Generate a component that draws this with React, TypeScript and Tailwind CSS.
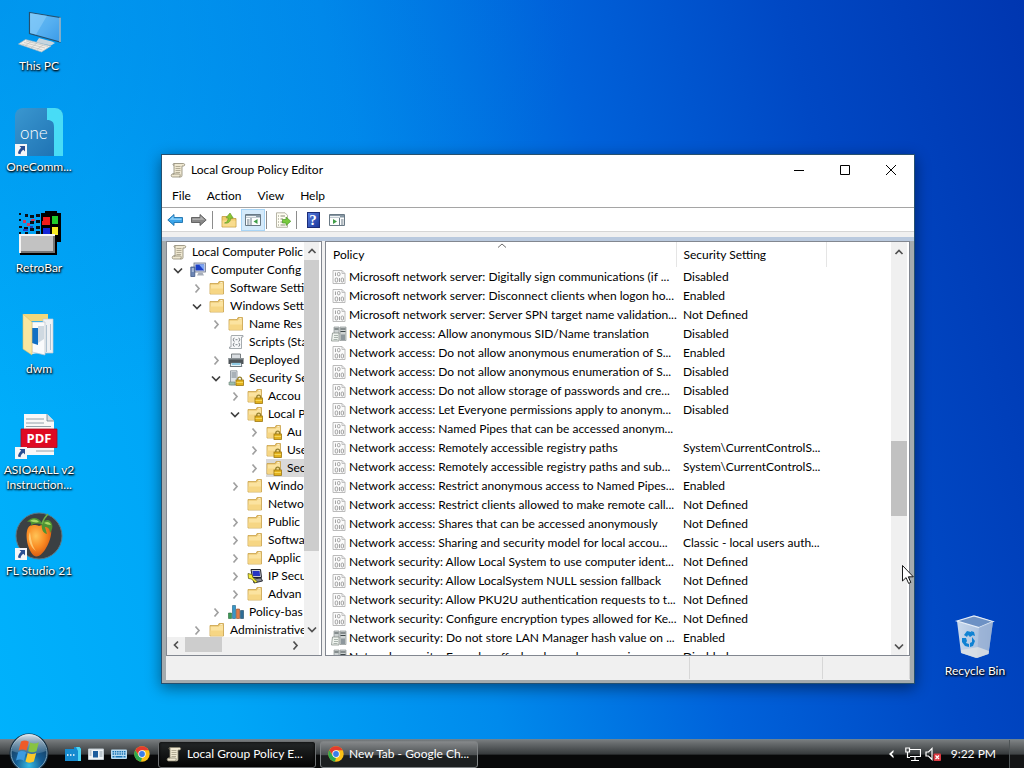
import type { ReactNode } from "react";

type IconName =
    | "scroll"
    | "computer"
    | "folder"
    | "script"
    | "printer"
    | "server"
    | "locked"
    | "ipsec"
    | "chart";

type TreeNode = {
    label: string;
    level: number;
    icon: IconName;
    state?: "open" | "closed";
    selected?: boolean;
};

const tree: TreeNode[] = [
    { label: "Local Computer Polic", level: 0, icon: "scroll" },
    { label: "Computer Config", level: 1, icon: "computer", state: "open" },
    { label: "Software Setti", level: 2, icon: "folder", state: "closed" },
    { label: "Windows Sett", level: 2, icon: "folder", state: "open" },
    { label: "Name Res", level: 3, icon: "folder", state: "closed" },
    { label: "Scripts (Sta", level: 3, icon: "script" },
    { label: "Deployed", level: 3, icon: "printer", state: "closed" },
    { label: "Security Se", level: 3, icon: "server", state: "open" },
    { label: "Accou", level: 4, icon: "locked", state: "closed" },
    { label: "Local P", level: 4, icon: "locked", state: "open" },
    { label: "Au", level: 5, icon: "locked", state: "closed" },
    { label: "Use", level: 5, icon: "locked", state: "closed" },
    { label: "Sec", level: 5, icon: "locked", state: "closed", selected: true },
    { label: "Windo", level: 4, icon: "folder", state: "closed" },
    { label: "Netwo", level: 4, icon: "folder" },
    { label: "Public", level: 4, icon: "folder", state: "closed" },
    { label: "Softwa", level: 4, icon: "folder", state: "closed" },
    { label: "Applic", level: 4, icon: "folder", state: "closed" },
    { label: "IP Secu", level: 4, icon: "ipsec", state: "closed" },
    { label: "Advan", level: 4, icon: "folder", state: "closed" },
    { label: "Policy-bas", level: 3, icon: "chart", state: "closed" },
    { label: "Administrative", level: 2, icon: "folder", state: "closed" },
];

const indents = ["pl-1", "pl-[3px]", "pl-[22px]", "pl-[41px]", "pl-[60px]", "pl-[79px]"];

type Policy = { name: string; setting: string; server?: boolean };

const policies: Policy[] = [
    { name: "Microsoft network server: Digitally sign communications (if ...", setting: "Disabled" },
    { name: "Microsoft network server: Disconnect clients when logon ho...", setting: "Enabled" },
    { name: "Microsoft network server: Server SPN target name validation...", setting: "Not Defined" },
    { name: "Network access: Allow anonymous SID/Name translation", setting: "Disabled", server: true },
    { name: "Network access: Do not allow anonymous enumeration of S...", setting: "Enabled" },
    { name: "Network access: Do not allow anonymous enumeration of S...", setting: "Disabled" },
    { name: "Network access: Do not allow storage of passwords and cre...", setting: "Disabled" },
    { name: "Network access: Let Everyone permissions apply to anonym...", setting: "Disabled" },
    { name: "Network access: Named Pipes that can be accessed anonym...", setting: "" },
    { name: "Network access: Remotely accessible registry paths", setting: "System\\CurrentControlS..." },
    { name: "Network access: Remotely accessible registry paths and sub...", setting: "System\\CurrentControlS..." },
    { name: "Network access: Restrict anonymous access to Named Pipes...", setting: "Enabled" },
    { name: "Network access: Restrict clients allowed to make remote call...", setting: "Not Defined" },
    { name: "Network access: Shares that can be accessed anonymously", setting: "Not Defined" },
    { name: "Network access: Sharing and security model for local accou...", setting: "Classic - local users auth..." },
    { name: "Network security: Allow Local System to use computer ident...", setting: "Not Defined" },
    { name: "Network security: Allow LocalSystem NULL session fallback", setting: "Not Defined" },
    { name: "Network security: Allow PKU2U authentication requests to t...", setting: "Not Defined" },
    { name: "Network security: Configure encryption types allowed for Ke...", setting: "Not Defined" },
    { name: "Network security: Do not store LAN Manager hash value on ...", setting: "Enabled", server: true },
    { name: "Network security: Force logoff when logon hours expire", setting: "Disabled", server: true },
];

function Svg({ children, className = "size-4" }: { children: ReactNode; className?: string }) {
    return (
        <svg viewBox="0 0 16 16" className={`${className} shrink-0`} fill="none" aria-hidden="true">
            {children}
        </svg>
    );
}

function ScrollIcon() {
    return (
        <Svg>
            <path d="M4 1.500h9.500c1.600 0 1.600 2.500 0 2.500H12v9.500c0 1-.7 1.500-1.500 1.500h-8C.8 15 .8 12 2.500 12H4z" fill="#efe8d2" stroke="#8c8672" strokeWidth=".8" />
            <path d="M4 1.500c-1.300 0-1.300 2 0 2M2.500 12h6.800c1.200 0 1.200 3-.2 3" stroke="#8c8672" strokeWidth=".8" />
            <path d="M5.500 4.500h5M5.500 6.500h5M5.500 8.500h5M5.500 10.500h4.500" stroke="#a39c86" strokeWidth=".8" />
        </Svg>
    );
}

function FolderShape() {
    return (
        <>
            <path d="M1 3.500h8l1-2h4.500v12.500H1z" fill="#e6c069" stroke="#c9a24a" strokeWidth=".8" />
            <path d="M1.500 4.500h8.200l1-1.200H14v10.300H1.500z" fill="#fbe3a0" />
            <path d="M1.500 8.500h12.500v5.100H1.500z" fill="#f6d684" />
            <path d="M11.300 2.500h2.200" stroke="#fdf6dc" strokeWidth=".9" />
        </>
    );
}

function LockShape() {
    return (
        <>
            <path d="M9.800 10.500V9c0-2.600 3.800-2.600 3.800 0v1.500" stroke="#94802f" strokeWidth="1.300" />
            <rect x="8" y="10" width="7.500" height="5.500" fill="#e3b21e" stroke="#9c7710" strokeWidth=".8" />
            <path d="M8.500 12.500h6.500" stroke="#f8dc62" strokeWidth=".9" />
        </>
    );
}

function TreeIcon({ name }: { name: IconName }) {
    switch (name) {
        case "scroll":
            return <ScrollIcon />;
        case "computer":
            return (
                <Svg>
                    <rect x="4" y="1" width="11.500" height="9" fill="#d4dae6" stroke="#6b7488" strokeWidth=".8" />
                    <path d="M5.500 2.500h8.600v6H5.500z" fill="#1c3fc6" />
                    <path d="M9 2.500h5.100v6z" fill="#7ea6f2" />
                    <path d="M8.500 10.500h4l1.500 3H7z" fill="#a6adb9" />
                    <path d="M.8 5h4v9.500h-4z" fill="#6d86b4" stroke="#415887" strokeWidth=".8" />
                    <path d="M1.800 7h2M1.800 9h2" stroke="#e4ecfa" />
                </Svg>
            );
        case "folder":
            return (
                <Svg>
                    <FolderShape />
                </Svg>
            );
        case "locked":
            return (
                <Svg>
                    <FolderShape />
                    <LockShape />
                </Svg>
            );
        case "script":
            return (
                <Svg>
                    <path d="M3.500 1.500H15v1.500h-1.500v11.500H1.500V13H3V3z" fill="#f8f9fa" stroke="#8f959b" strokeWidth=".8" />
                    <path d="M6.500 4c-1.500 0-.5 1.700-1.600 1.700 1.100 0 .1 1.700 1.600 1.700M10.500 4c1.500 0 .5 1.700 1.600 1.700-1.100 0-.1 1.700-1.600 1.700M6.500 9c-1.500 0-.5 1.700-1.600 1.700 1.100 0 .1 1.700 1.600 1.700M10.500 9c1.500 0 .5 1.700 1.600 1.700-1.100 0-.1 1.700-1.600 1.700" stroke="#5f666d" strokeWidth=".8" />
                    <path d="M7.500 5.700h2M7.500 10.700h2" stroke="#737b83" strokeWidth=".9" />
                </Svg>
            );
        case "printer":
            return (
                <Svg>
                    <path d="M3.500 2h9v5h-9z" fill="#d9dde1" stroke="#5e6468" strokeWidth=".8" />
                    <path d="M.5 6h15v6H.5z" fill="#4d5357" />
                    <path d="M.5 6h15v1.500H.5z" fill="#8b9296" />
                    <path d="M3 10.500h10l.8 4H2.200z" fill="#e6f3f8" stroke="#49545a" strokeWidth=".8" />
                    <path d="M4 12h8" stroke="#38a0cf" />
                </Svg>
            );
        case "server":
            return (
                <Svg>
                    <path d="M2.500.8h6.500v14H2.500z" fill="#dde2e6" stroke="#838c94" strokeWidth=".8" />
                    <path d="M3.500 3h4.500M3.500 5h4.500M3.500 7h4.500" stroke="#75808a" />
                    <path d="M1 12h6v3H1z" fill="#9dbfae" stroke="#70837a" strokeWidth=".6" />
                    <LockShape />
                </Svg>
            );
        case "ipsec":
            return (
                <Svg>
                    <path d="M4 1.500h9.500l1 8h-9z" fill="#c8cbd2" stroke="#20222a" />
                    <path d="M5.500 3h7l.6 5H6z" fill="#2635c2" />
                    <path d="M6 11l8-1 1.500 3-8.500 2z" fill="#8a8d94" stroke="#20222a" strokeWidth=".9" />
                    <path d="M1 5.500l4 1 1 3 4 4-1.500 1.500-4-4-3-.5z" fill="#f7ef38" stroke="#55500a" strokeWidth=".7" />
                </Svg>
            );
        case "chart":
            return (
                <Svg>
                    <path d="M.5 9h3v5.500h-3z" fill="#3e9a56" stroke="#26683a" strokeWidth=".6" />
                    <path d="M4.500 1.500h3v13h-3z" fill="#3796c9" stroke="#22607f" strokeWidth=".6" />
                    <path d="M8.500 5h3v9.500h-3z" fill="#e07a47" stroke="#8d4724" strokeWidth=".6" />
                    <path d="M12.500 6.500h3v8h-3z" fill="#2d6d96" stroke="#1d4762" strokeWidth=".6" />
                </Svg>
            );
    }
}

function PolicyIcon({ server }: { server?: boolean }) {
    if (server) {
        return (
            <Svg>
                <path d="M3 1h5v7H3zM9 1h6v13.500H9z" fill="#cdd2d2" stroke="#8b9292" strokeWidth=".7" />
                <path d="M3.500 3h4M9.500 3h5M9.500 5.500h5" stroke="#3f484a" />
                <path d="M1.500 7H8v8H.5z" fill="#eff3ee" stroke="#7b8580" strokeWidth=".7" />
                <path d="M3 9.500h4M3 11.500h4M2.500 13.500h4" stroke="#8b9690" strokeWidth=".7" />
                <path d="M10 8.500h4v5.500h-4z" fill="#8d979c" />
            </Svg>
        );
    }
    return (
        <Svg>
            <path d="M2 1.500h9l3 3v10H2z" fill="#fbfbfb" stroke="#b4b4b4" strokeWidth=".9" />
            <path d="M11 1.500v3h3" stroke="#b4b4b4" strokeWidth=".8" />
            <path d="M4.500 3.500V7M8.500 9v4" stroke="#9a9a9a" strokeWidth=".9" />
            <rect x="6.500" y="3.500" width="2.500" height="3.300" rx="1" stroke="#9a9a9a" strokeWidth=".9" />
            <rect x="4.200" y="9" width="2.500" height="4" rx="1" stroke="#9a9a9a" strokeWidth=".9" />
            <rect x="10.200" y="9" width="2.300" height="4" rx="1" stroke="#9a9a9a" strokeWidth=".9" />
        </Svg>
    );
}

function Chevron({ dir }: { dir: "up" | "down" | "left" | "right" }) {
    const paths = {
        up: "M4.500 10L8 6.500l3.500 3.500",
        down: "M4 6.500l4 4 4-4",
        left: "M10 4.500L6.500 8l3.500 3.500",
        right: "M6.500 4.500L10 8.500l-3.500 4",
    };
    return (
        <Svg>
            <path d={paths[dir]} stroke="currentColor" strokeWidth="1.700" />
        </Svg>
    );
}

function ShortcutBadge() {
    return (
        <svg viewBox="0 0 12 12" className="absolute bottom-0 left-0 size-3" aria-hidden="true">
            <path d="M0 0h12v12H0z" fill="#f4f6f8" />
            <path d="M4.500 2h5.500v5.500L8.300 5.800C6.500 7 5.800 8.200 5.500 10.300L3 9.500c.1-2.300 1.200-4.200 3.200-5.800z" fill="#2b4f93" />
        </svg>
    );
}

function ThisPcIcon() {
    return (
        <svg viewBox="0 0 48 48" className="size-12" aria-hidden="true">
            <defs>
                <linearGradient id="pc" x1="0" y1="0" x2="1" y2="1">
                    <stop offset="0" stopColor="#6bc0f5" />
                    <stop offset=".55" stopColor="#54aef0" />
                    <stop offset="1" stopColor="#3b9be8" />
                </linearGradient>
            </defs>
            <path d="M14.500 5.500l30.500 5v24.500l-30.500-8.500z" fill="url(#pc)" stroke="#24506f" strokeWidth="1.200" />
            <path d="M15 6l17 2.800L21 27.500l-6-1.600z" fill="#8fd0fa" opacity=".55" />
            <path d="M45 10.500v24.500" stroke="#c9dbe6" strokeWidth="1.200" />
            <path d="M24 31l7 2 6 1.500 3 1.500-4 2.500-15-3z" fill="#c7d5de" />
            <path d="M3.500 37l7-4.500 25.500 6.500-9.500 6z" fill="#f0ede8" stroke="#aab9c2" strokeWidth=".7" />
            <path d="M6.500 37l21 6M9 35.500l21 5.500M11 34l22 5.500M10 39l6-4.500M16 41l6-5M22 42.500l6-4.500" stroke="#b8bbb9" strokeWidth=".6" />
        </svg>
    );
}

function OneIcon() {
    return (
        <span className="relative flex size-12 items-center overflow-hidden rounded-t-lg bg-linear-to-br from-[#3a97d0] to-[#1c70b1]">
            <svg viewBox="0 0 48 48" className="absolute inset-0 size-12" aria-hidden="true">
                <path d="M32 0h16v48h-9V19c0-5-2-7-7-7z" fill="#48dcf6" />
            </svg>
            <span className="relative pl-[5px] text-[17px] leading-none font-light text-white">one</span>
        </span>
    );
}

function RetroIcon() {
    return (
        <svg viewBox="0 0 48 48" className="size-12" shapeRendering="crispEdges" aria-hidden="true">
            <path d="M26 4h4V2h12v2h4v29h-4v-3h-8v5h-8z" fill="#000" />
            <path d="M28 8h7v8h-8z" fill="#f21b1b" />
            <path d="M37 7h6v8h-6z" fill="#1fcc2b" />
            <path d="M28 19h7v8h-7z" fill="#1325d8" />
            <path d="M37 18h6v8h-6z" fill="#f6e922" />
            <path d="M21 5h4v3h-4zM15 6h4v3h-4zM10 5h3v3h-3zM4 4h2v2H4zM21 11h4v3h-4zM15 12h4v3h-4zM4 10h2v2H4zM21 17h4v3h-4zM15 19h4v3h-4zM9 18h4v3H9zM4 17h3v2H4zM21 22h4v3h-4zM10 23h3v2h-3zM4 23h2v2H4z" fill="#071018" />
            <path d="M8 11h3v3H8zM16 10h4v2h-4zM12 14h3v3h-3z" fill="#d23b5a" />
            <path d="M8 20h5v2H8zM15 17h3v2h-3z" fill="#233dbb" />
            <path d="M5 26h37v20H5z" fill="#000" />
            <path d="M4 25h36v19H4z" fill="#f5f5f5" />
            <path d="M6 27h34v17H6z" fill="#777" />
            <path d="M6 27h32v15H6z" fill="#c2c2c2" />
        </svg>
    );
}

function DwmIcon() {
    return (
        <svg viewBox="0 0 48 48" className="size-12" aria-hidden="true">
            <path d="M8 4h25v7H8z" fill="#f1d77c" />
            <path d="M28 9h10v34H28z" fill="#eef1f4" stroke="#c1c9d0" strokeWidth=".7" />
            <path d="M17 13h12v29l-12 2z" fill="#fafbfc" />
            <path d="M17 12h13v33l-13-3z" fill="#fafbfc" stroke="#bac4cc" strokeWidth=".7" />
            <path d="M31 15h1v27h-1zM35 14h1v26h-1z" fill="#aec1d1" />
            <path d="M17 18h6v17l-6-2z" fill="#1270c4" />
            <path d="M23 16h6v13l-6 4z" fill="#cfd9e1" />
            <path d="M8 4l9 8v33l-9-6z" fill="#f9e6a0" stroke="#dcc06a" strokeWidth=".6" />
        </svg>
    );
}

function PdfIcon() {
    return (
        <span className="relative flex size-12 items-center justify-center">
            <svg viewBox="0 0 48 48" className="absolute inset-0 size-12" aria-hidden="true">
                <path d="M9 3h23l7 7v34H9z" fill="#f8f8f8" />
                <path d="M32 3v7h7" fill="#d8dde1" stroke="#6d7f8d" strokeWidth=".8" />
                <path d="M11 8h18M11 12h18M11 15.500h25M21 40h18" stroke="#788b98" strokeWidth=".8" />
                <path d="M6 18h36v18.500H6z" fill="#df0a22" stroke="#a60b1e" strokeWidth=".8" />
            </svg>
            <span className="relative pt-[7px] font-['Open_Sans'] text-[13px] leading-none font-bold text-white">PDF</span>
        </span>
    );
}

function FruitIcon() {
    return (
        <svg viewBox="0 0 48 48" className="size-12" aria-hidden="true">
            <defs>
                <radialGradient id="fruit" cx=".38" cy=".35" r=".75">
                    <stop offset="0" stopColor="#ffc457" />
                    <stop offset=".5" stopColor="#f98a22" />
                    <stop offset="1" stopColor="#cf4d0c" />
                </radialGradient>
            </defs>
            <circle cx="24" cy="24" r="23" fill="#3b4043" stroke="#5d7884" strokeWidth="1" />
            <path d="M13 16c2-4 8-3 11-2 4-2 10-1 12 3 2 8-7 28-15 27.500C14 43 9 24 13 16z" fill="url(#fruit)" />
            <path d="M15 20c1 7 2 14 6 19-6-4-9-13-6-19z" fill="#ffdf92" opacity=".7" />
            <path d="M27 11C23 5 17 4 12 10c3-1 5 0 4 4 3-3 7-3 11-1zM27 11c4-4 8-4 10 1 1 3 0 6-2 9 0-4-2-6-5-6l2 7c-4-1-6-5-5-11z" fill="#4e9333" />
            <path d="M24 10c-3-3-6-3-9-1 3 1 6 2 9 1zM29 11c3-2 6-1 7 2-3 0-5-1-7-2z" fill="#a8d965" />
            <path d="M27 12c1-4 3-7 6-10" stroke="#6eae4a" strokeWidth="1.500" fill="none" />
        </svg>
    );
}

function BinIcon() {
    return (
        <svg viewBox="0 0 48 48" className="size-12" aria-hidden="true">
            <defs>
                <linearGradient id="bin" x1="0" y1="0" x2="1" y2="0">
                    <stop offset="0" stopColor="#c8d8ec" />
                    <stop offset=".6" stopColor="#adc3e0" />
                    <stop offset="1" stopColor="#8ba6cd" />
                </linearGradient>
            </defs>
            <path d="M6 9L25 4l17 5.500-4.500 32L25 46 10 41z" fill="url(#bin)" />
            <path d="M6 9l17-5 19 5.500-14 6z" fill="#6d91c4" stroke="#e6eef8" strokeWidth="1.200" />
            <path d="M28 15.500L26 46l11.500-4L42 9.500z" fill="#9ab2d4" opacity=".8" />
            <path d="M10 38l17-3 11 4-.5 3L26 46 10.500 41z" fill="#dfe2e5" opacity=".8" />
            <path d="M13 23l3-4 4 1 2 3-3 2-2-2-1 2zM20 19l3 1 1 4-3-1zM11 26l4 0 1 3-1 2 3 1v3l-4-1-3-4zM21 25l3 4-2 5-3 1 0-4 2-1z" fill="#0f82d3" />
        </svg>
    );
}

function DesktopIcon({ label, shortcut, children }: { label: string; shortcut?: boolean; children: ReactNode }) {
    return (
        <button className="flex h-[101px] w-[74px] flex-col items-center gap-[3px]">
            <span className="relative block size-12">
                {children}
                {shortcut && <ShortcutBadge />}
            </span>
            <span className="text-[12px] leading-[15px] whitespace-pre text-white [text-shadow:1px_1px_2px_#000,0_1px_2px_#000]">
                {label}
            </span>
        </button>
    );
}

function ChromeIcon() {
    return (
        <Svg>
            <circle cx="8" cy="8" r="7.700" fill="#fbc116" />
            <path d="M1.300 4.200A7.700 7.700 0 0 1 14.700 4.200H8L5 9.500z" fill="#e33b2e" />
            <path d="M1.300 4.200L4.800 10 8 11.800l-1 3.800A7.700 7.700 0 0 1 1.300 4.200z" fill="#2da94f" />
            <circle cx="8" cy="8" r="3.700" fill="#fff" />
            <circle cx="8" cy="8" r="2.900" fill="#3a7de8" />
        </Svg>
    );
}

function StartOrb() {
    return (
        <svg viewBox="0 0 40 40" className="size-10" aria-hidden="true">
            <defs>
                <radialGradient id="orb" cx=".5" cy=".85" r=".8">
                    <stop offset="0" stopColor="#35bbe4" />
                    <stop offset=".45" stopColor="#165c92" />
                    <stop offset="1" stopColor="#17344f" />
                </radialGradient>
                <linearGradient id="shine" x1="0" y1="0" x2="0" y2="1">
                    <stop offset="0" stopColor="#e6f0f7" stopOpacity=".95" />
                    <stop offset="1" stopColor="#8db4cd" stopOpacity=".25" />
                </linearGradient>
            </defs>
            <circle cx="20" cy="20" r="19.500" fill="#10283c" />
            <circle cx="20" cy="20" r="18" fill="url(#orb)" stroke="#7ea5bd" strokeWidth="1" />
            <path d="M3 18a17 17 0 0 1 34 0c-8 4-25 4-34 0z" fill="url(#shine)" />
            <path d="M12 8.500c2.800-1.500 5.200-1.400 7.800.3l-2.300 8.900c-2.600-1.500-5.200-1.500-7.900-.2z" fill="#ee5b28" />
            <path d="M21.300 9.500c2.800 1.500 5.600 1.400 8.500-.2l-2.300 9c-2.800 1.400-5.700 1.300-8.400 0z" fill="#88c341" />
            <path d="M9.200 19c2.800-1.400 5.300-1.200 7.900.3l-2.200 8.500c-2.600-1.600-5.200-1.600-7.900-.2z" fill="#3d9be0" />
            <path d="M18.700 20c2.800 1.500 5.700 1.400 8.500 0l-2.300 8.500c-2.800 1.600-5.600 1.500-8.400-.1z" fill="#fcc82b" />
        </svg>
    );
}

function PanelIcon({ flip }: { flip?: boolean }) {
    return (
        <Svg>
            <path d="M.5 2.500h15v11H.5z" fill="#fcfdfd" stroke="#697985" />
            <path d="M1 3h14v2.500H1z" fill="#8797a3" />
            <path d="M1 4.500h10" stroke="#f0f3f5" />
            <path d={flip ? "M10.500 6v7" : "M6 6v7"} stroke="#697985" />
            <path d={flip ? "M12 8h2.500M12 10h2.500M12 12h2.500" : "M2 8h2.500M2 10h2.500M2 12h2.500"} stroke="#697985" />
            <path d={flip ? "M4 7l4 2.500L4 12z" : "M12.500 7l-4 2.500 4 2.500z"} fill="#3f9d46" />
        </Svg>
    );
}

function ToolButton({ label, active, children }: { label: string; active?: boolean; children: ReactNode }) {
    return (
        <button
            aria-label={label}
            className={`flex h-[22px] w-6 items-center justify-center ${active ? "border border-[#a8d4f5] bg-[#d5eafa]" : ""}`}
        >
            {children}
        </button>
    );
}

function ToolSeparator() {
    return <span className="mr-1 ml-px h-[18px] w-px bg-[#8c8c8c]" />;
}

function Toolbar() {
    return (
        <div className="flex h-6 shrink-0 items-center border-b border-[#d5d5d5] bg-white pt-px pl-px">
            <ToolButton label="Back">
                <Svg>
                    <path d="M.8 8L7 2.500V5.500h8.500v5H7v3z" fill="#3ba5ea" stroke="#1b70ad" strokeWidth=".9" />
                    <path d="M2.500 7.700L6.500 4v2.500h8v1.500z" fill="#8fd1fa" />
                </Svg>
            </ToolButton>
            <ToolButton label="Forward">
                <Svg>
                    <path d="M15.200 8L9 2.500V5.500H.5v5H9v3z" fill="#898989" stroke="#5a5a5a" strokeWidth=".9" />
                    <path d="M13.500 7.700L9.500 4v2.500h-8v1.500z" fill="#b1b1b1" />
                </Svg>
            </ToolButton>
            <ToolSeparator />
            <ToolButton label="Up one level">
                <Svg>
                    <path d="M1 4.500h5l1.500 2H15v8.500H1z" fill="#f1cc6d" stroke="#c29a3d" strokeWidth=".8" />
                    <path d="M1.500 8.500h13v6h-13z" fill="#f9dc8e" />
                    <path d="M3.500 11c2.500-.5 3.500-2.500 3.700-5L5 5.800 9 1l3.200 5-2.400.2C9.600 9.500 7.500 11.800 3.500 11z" fill="#8bc631" stroke="#5e932b" strokeWidth=".6" />
                </Svg>
            </ToolButton>
            <ToolButton label="Show or hide console tree" active>
                <PanelIcon />
            </ToolButton>
            <ToolSeparator />
            <ToolButton label="Export list">
                <Svg>
                    <path d="M1.500.8h8.500l2.500 2.500v12h-11z" fill="#fffef3" stroke="#a5a292" strokeWidth=".8" />
                    <path d="M3 4h1M5.500 4H10M3 7h1M5.500 7H8M3 10h1M5.500 10H8M3 13h1M5.500 13H10" stroke="#8a8979" />
                    <path d="M7.500 7.500h3.500V5l4.800 4.300-4.800 4.200V11H7.500z" fill="#79ca3e" stroke="#4c9829" strokeWidth=".7" />
                </Svg>
            </ToolButton>
            <ToolSeparator />
            <ToolButton label="Help">
                <span className="flex h-4 w-[13px] items-center justify-center border border-[#1b2c77] bg-linear-to-br from-[#567bdd] to-[#1d379c] font-['Liberation_Serif',serif] text-[15px] leading-none font-bold text-white">
                    ?
                </span>
            </ToolButton>
            <ToolButton label="Show or hide action pane">
                <PanelIcon flip />
            </ToolButton>
        </div>
    );
}

function TreePane() {
    return (
        <div className="flex w-[156px] shrink-0 flex-col border border-[#828790] bg-white">
            <div className="flex min-h-0 flex-1 pr-0.5">
                <ul role="tree" className="min-w-0 flex-1 overflow-hidden pt-px">
                    {tree.map((node) => (
                        <li key={node.label} role="treeitem" className={`flex h-[18px] items-center ${indents[node.level]}`}>
                            {node.level > 0 && (
                                <span className="mr-1 size-4 shrink-0">
                                    {node.state && (
                                        <button
                                            aria-label={node.state === "open" ? "Collapse" : "Expand"}
                                            className={`block ${node.state === "open" ? "text-[#404040]" : "text-[#a0a0a0]"}`}
                                        >
                                            <Chevron dir={node.state === "open" ? "down" : "right"} />
                                        </button>
                                    )}
                                </span>
                            )}
                            <span className={`flex h-[18px] flex-1 items-center gap-[5px] ${node.selected ? "bg-[#d9d9d9]" : ""}`}>
                                <TreeIcon name={node.icon} />
                                <span className="whitespace-nowrap">{node.label}</span>
                            </span>
                        </li>
                    ))}
                </ul>
                <div className="flex w-[15px] shrink-0 flex-col items-center justify-between bg-[#f0f0f0] text-[#505050]">
                    <button aria-label="Scroll up" className="flex h-[18px] items-center">
                        <Chevron dir="up" />
                    </button>
                    <span className="mb-auto h-[291px] w-full bg-[#cdcdcd]" />
                    <button aria-label="Scroll down" className="flex h-[17px] items-center">
                        <Chevron dir="down" />
                    </button>
                </div>
            </div>
            <div className="mr-0.5 flex h-[18px] items-start bg-[#f0f0f0] pr-[15px] text-[#505050]">
                <button aria-label="Scroll left" className="flex w-[18px] justify-center">
                    <Chevron dir="left" />
                </button>
                <span className="mr-auto h-[15px] w-[37px] bg-[#cdcdcd]" />
                <button aria-label="Scroll right" className="flex w-[18px] justify-center">
                    <Chevron dir="right" />
                </button>
            </div>
        </div>
    );
}

function PolicyList() {
    return (
        <div className="flex min-w-0 flex-1 border border-[#828790] bg-white">
            <div className="min-w-0 flex-1 overflow-hidden">
                <table className="w-full table-fixed border-collapse text-left">
                    <thead>
                        <tr className="h-[25px]">
                            <th className="relative w-[350px] border-r border-[#e5e5e5] p-0 pl-[7px] font-normal">
                                Policy
                                <Svg className="absolute -top-1 left-[168px] size-4">
                                    <path d="M4 9.500L8 6l4 3.500" stroke="#6d6d6d" />
                                </Svg>
                            </th>
                            <th className="w-[150px] border-r border-[#e5e5e5] p-0 pl-[7px] font-normal">Security Setting</th>
                            <th className="p-0" />
                        </tr>
                    </thead>
                    <tbody>
                        {policies.map((policy, i) => (
                            <tr key={i} className="h-[19px]">
                                <td className="p-0 pl-[5px]">
                                    <span className="flex h-[19px] items-center gap-[2px] whitespace-nowrap">
                                        <PolicyIcon server={policy.server} />
                                        {policy.name}
                                    </span>
                                </td>
                                <td className="p-0 pl-[7px] whitespace-nowrap">{policy.setting}</td>
                                <td className="p-0" />
                            </tr>
                        ))}
                    </tbody>
                </table>
            </div>
            <div className="mr-0.5 flex w-4 shrink-0 flex-col items-center bg-[#f0f0f0] text-[#505050]">
                <button aria-label="Scroll up" className="flex h-[19px] items-center">
                    <Chevron dir="up" />
                </button>
                <span className="mt-[180px] mb-auto h-[75px] w-full bg-[#c1c1c1]" />
                <button aria-label="Scroll down" className="flex h-[19px] items-center">
                    <Chevron dir="down" />
                </button>
            </div>
        </div>
    );
}

function PolicyEditor() {
    return (
        <section className="absolute top-[154px] left-[161px] flex h-[530px] w-[754px] flex-col border border-[#26506f] bg-[#a4abae] text-[12px] leading-[18px] text-black shadow-[0_4px_14px_rgba(0,0,0,0.45)]">
            <header className="flex h-[30px] shrink-0 items-center bg-white pl-2">
                <ScrollIcon />
                <h1 className="ml-[5px] flex-1">Local Group Policy Editor</h1>
                <button aria-label="Minimize" className="flex w-[46px] justify-center">
                    <Svg>
                        <path d="M3 8.500h10" stroke="#000" />
                    </Svg>
                </button>
                <button aria-label="Maximize" className="flex w-[46px] justify-center">
                    <Svg>
                        <path d="M3.500 3.500h9v9h-9z" stroke="#000" />
                    </Svg>
                </button>
                <button aria-label="Close" className="flex w-[46px] justify-center">
                    <Svg>
                        <path d="M3 3l10 10M13 3L3 13" stroke="#000" />
                    </Svg>
                </button>
            </header>
            <nav className="flex h-[23px] shrink-0 items-center gap-4 border-b border-[#a5a5a5] bg-white pl-[10px]">
                <button>File</button>
                <button>Action</button>
                <button>View</button>
                <button>Help</button>
            </nav>
            <Toolbar />
            <div className="h-[5px] shrink-0 bg-[#f0f0f0]" />
            <div className="h-1 shrink-0 bg-[#b9c9de]" />
            <main className="mx-1 flex min-h-0 flex-1 gap-[3px] bg-[#f0f0f0]">
                <TreePane />
                <PolicyList />
            </main>
            <footer className="mx-1 mb-[3px] flex h-6 shrink-0 justify-end bg-[#f0f0f0] py-px">
                <span className="w-[133px] border-l border-[#d7d7d7]" />
                <span className="w-22 border-x border-[#d7d7d7]" />
            </footer>
        </section>
    );
}

function Taskbar() {
    return (
        <footer className="flex h-[29px] items-center border-t border-[#6d8290] bg-linear-to-b from-[#777b7d] via-[#373b3d] via-50% to-[#08090a] to-55% text-[12px] text-white">
            <button aria-label="Start" className="z-10 -mt-[9px] ml-[9px] h-[33px] w-10">
                <StartOrb />
            </button>
            <div className="ml-4 flex items-center gap-[7px]">
                <button aria-label="OneCommander">
                    <Svg>
                        <path d="M0 3h9V1h5.500l1.500 2v12H0z" fill="#168bd0" />
                        <path d="M11 1h3.500L16 3v12h-3V5z" fill="#4cd5f4" />
                        <path d="M2 9h1.500M5 9h1.500M8 9h1.500" stroke="#fff" strokeWidth="1.300" />
                    </Svg>
                </button>
                <button aria-label="Explorer">
                    <Svg>
                        <path d="M.5 3h15v10.500H.5z" fill="#eef3f6" stroke="#bfc8ce" />
                        <path d="M5 5h5v6.500H5z" fill="#1c5c9b" />
                        <path d="M1.500 5h2M1.500 7h2M1.500 9h2M11.500 6h3M11.500 8h3M11.500 10h3" stroke="#8a9ba7" />
                    </Svg>
                </button>
                <button aria-label="Keyboard">
                    <Svg>
                        <rect y="3.500" width="16" height="9.500" rx="1" fill="#b9dcf2" />
                        <path d="M1.500 5.700h13M1.500 8h13" stroke="#1972b1" strokeWidth="1.400" strokeDasharray="1.500 .8" />
                        <path d="M1.500 10.700h2M4.500 10.700h7M12.500 10.700h2" stroke="#1972b1" strokeWidth="1.400" />
                    </Svg>
                </button>
                <button aria-label="Google Chrome">
                    <ChromeIcon />
                </button>
            </div>
            <div className="ml-2 flex flex-1 gap-1">
                <button className="flex h-[27px] w-[158px] items-center gap-[5px] rounded-[3px] border border-[#6c6f71] bg-linear-to-b from-[#242728] to-[#050505] pl-[7px] whitespace-nowrap shadow-[inset_0_0_3px_#000]">
                    <ScrollIcon />
                    Local Group Policy E...
                </button>
                <button className="flex h-[27px] w-[158px] items-center gap-[5px] rounded-[3px] border border-[#7f8385] bg-linear-to-b from-[#85888a] via-[#4e5254] via-50% to-[#1c1f20] to-55% pl-[7px] whitespace-nowrap">
                    <ChromeIcon />
                    New Tab - Google Ch...
                </button>
            </div>
            <div className="flex h-full items-center">
                <button aria-label="Show hidden icons">
                    <Svg className="size-3">
                        <path d="M10 2.500L4 8l6 5.500v-3L7.500 8 10 5.500z" fill="#fff" />
                    </Svg>
                </button>
                <button aria-label="Network" className="ml-[7px]">
                    <Svg>
                        <path d="M5 3.500h10.500v7H5M10 11v3M6 14.500h8" stroke="#fff" strokeWidth="1.200" />
                        <path d="M.8 2h3.700v4H.8zM2.500 6v5.500H5" stroke="#fff" strokeWidth="1.200" />
                    </Svg>
                </button>
                <button aria-label="Volume muted" className="ml-1">
                    <Svg>
                        <path d="M1 6h2.500L7 2.500v11L3.500 10H1z" stroke="#fff" strokeWidth="1.200" />
                        <rect x="8.500" y="7.500" width="7.500" height="7.500" rx="1" fill="#dd3a42" />
                        <path d="M10.500 9.500l3.500 3.500M14 9.500L10.500 13" stroke="#fff" strokeWidth="1.200" />
                    </Svg>
                </button>
                <time className="ml-[10px]">9:22 PM</time>
                <span className="ml-[13px] h-full w-[15px] border-l border-[#4e5456] bg-white/5" />
            </div>
        </footer>
    );
}

export default function App() {
    return (
        <div className="flex min-h-screen flex-col overflow-hidden bg-[linear-gradient(76deg,#00b2fc_0%,#00a6f7_20%,#008aec_42%,#0062da_61%,#0048c4_80%,#0036b0_100%)] font-[Lato,'Open_Sans',sans-serif]">
            <div className="relative flex flex-1 justify-between bg-[radial-gradient(ellipse_at_0%_0%,rgba(0,128,226,0.45)_0%,rgba(0,128,226,0)_40%)]">
                <div className="flex flex-col pt-[7px] pl-[2px]">
                    <DesktopIcon label="This PC">
                        <ThisPcIcon />
                    </DesktopIcon>
                    <DesktopIcon label="OneComm..." shortcut>
                        <OneIcon />
                    </DesktopIcon>
                    <DesktopIcon label="RetroBar">
                        <RetroIcon />
                    </DesktopIcon>
                    <DesktopIcon label="dwm">
                        <DwmIcon />
                    </DesktopIcon>
                    <DesktopIcon label={"ASIO4ALL v2\nInstruction..."} shortcut>
                        <PdfIcon />
                    </DesktopIcon>
                    <DesktopIcon label="FL Studio 21" shortcut>
                        <FruitIcon />
                    </DesktopIcon>
                </div>
                <div className="self-end pr-3 pb-[26px]">
                    <DesktopIcon label="Recycle Bin">
                        <BinIcon />
                    </DesktopIcon>
                </div>
                <PolicyEditor />
                <svg viewBox="0 0 12 19" className="absolute top-[565px] left-[902px] h-[19px] w-3" aria-hidden="true">
                    <path d="M.5.5v15.500l3.600-3.400 2.500 5.800 2.200-1-2.500-5.600h5z" fill="#fff" stroke="#000" strokeWidth=".9" />
                </svg>
            </div>
            <Taskbar />
        </div>
    );
}
